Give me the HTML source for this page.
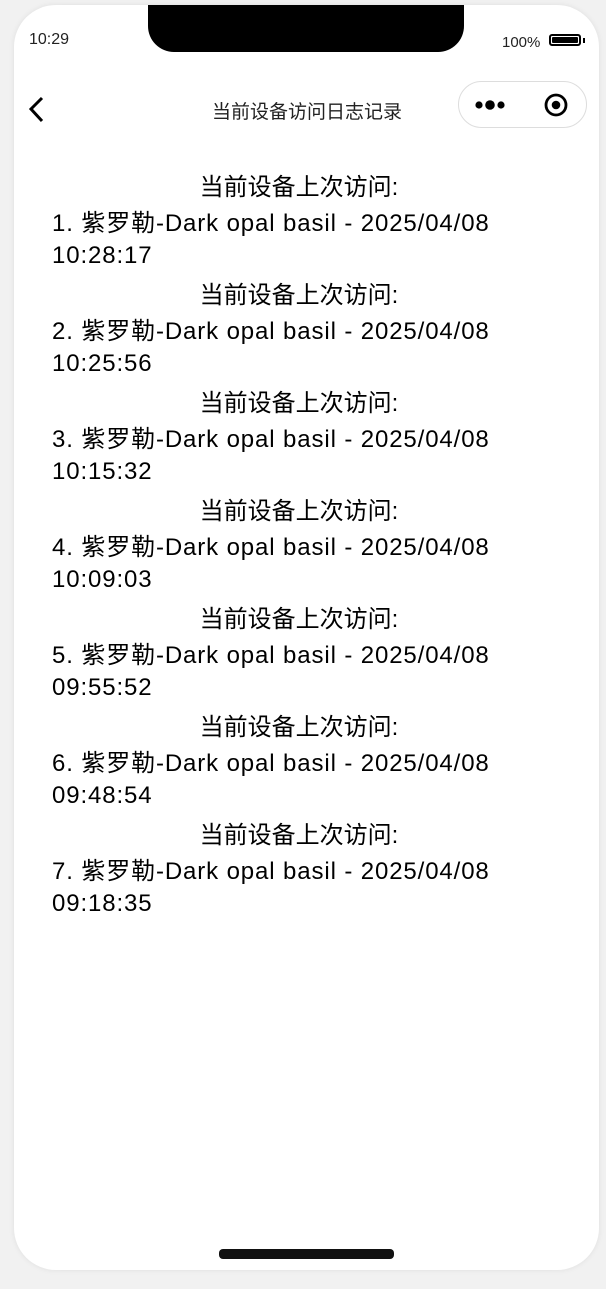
<!DOCTYPE html>
<html><head><meta charset="utf-8"><style>
html,body{margin:0;padding:0;}
body{width:606px;height:1289px;background:#f1f1f1;position:relative;overflow:hidden;font-family:"Liberation Sans","Noto Sans CJK SC",sans-serif;color:#000;}
.phone{position:absolute;left:14px;top:5px;width:585px;height:1265px;background:#fff;border-radius:42px;box-shadow:0 0 6px rgba(0,0,0,0.08);}
.notch{position:absolute;left:148px;top:5px;width:316px;height:47px;background:#000;border-radius:0 0 26px 26px;}
.time{position:absolute;left:29px;top:31px;font-size:16px;color:#222;}
.bat{position:absolute;left:502px;top:34px;font-size:15px;color:#222;}
.batt{position:absolute;left:549px;top:34px;width:32px;height:12px;border:2px solid #000;border-radius:3px;box-sizing:border-box;padding:1px;}
.batt div{width:100%;height:100%;background:#000;border-radius:1px;}
.nub{position:absolute;left:583px;top:38px;width:2px;height:5px;background:#000;}
.title{position:absolute;left:0;width:614px;text-align:center;top:97px;font-size:19px;color:#222;}
.cap{position:absolute;left:458px;top:81px;width:129px;height:47px;border:1px solid #ddd;border-radius:24px;box-sizing:border-box;}
.content{position:absolute;left:52px;top:170px;width:520px;font-size:24px;line-height:32px;}
.h{text-align:center;width:494px;height:38px;line-height:36px;}
.it{height:70px;white-space:nowrap;letter-spacing:0.88px;}
.bar{position:absolute;left:219px;top:1249px;width:175px;height:10px;border-radius:4px;background:#111;}
</style></head><body>
<div class="phone"></div>
<div class="notch"></div>
<div class="time">10:29</div>
<div class="bat">100%</div>
<div class="batt"><div></div></div><div class="nub"></div>
<svg style="position:absolute;left:26px;top:95px" width="22" height="30"><path d="M16 3 L5 14 L16 26" stroke="#000" stroke-width="3" fill="none"/></svg>
<div class="title">当前设备访问日志记录</div>
<div class="cap"></div>
<svg style="position:absolute;left:470px;top:92px" width="110" height="26">
<circle cx="9" cy="13" r="3.6" fill="#000"/><circle cx="20" cy="13" r="4.8" fill="#000"/><circle cx="31" cy="13" r="3.6" fill="#000"/>
<circle cx="86" cy="13" r="10" stroke="#000" stroke-width="2.8" fill="none"/><circle cx="86" cy="13" r="4.3" fill="#000"/>
</svg>
<div class="content">
<div class="h">当前设备上次访问:</div>
<div class="it">1. 紫罗勒-Dark opal basil - 2025/04/08<br>10:28:17</div>
<div class="h">当前设备上次访问:</div>
<div class="it">2. 紫罗勒-Dark opal basil - 2025/04/08<br>10:25:56</div>
<div class="h">当前设备上次访问:</div>
<div class="it">3. 紫罗勒-Dark opal basil - 2025/04/08<br>10:15:32</div>
<div class="h">当前设备上次访问:</div>
<div class="it">4. 紫罗勒-Dark opal basil - 2025/04/08<br>10:09:03</div>
<div class="h">当前设备上次访问:</div>
<div class="it">5. 紫罗勒-Dark opal basil - 2025/04/08<br>09:55:52</div>
<div class="h">当前设备上次访问:</div>
<div class="it">6. 紫罗勒-Dark opal basil - 2025/04/08<br>09:48:54</div>
<div class="h">当前设备上次访问:</div>
<div class="it">7. 紫罗勒-Dark opal basil - 2025/04/08<br>09:18:35</div>
</div>
<div class="bar"></div>
</body></html>
